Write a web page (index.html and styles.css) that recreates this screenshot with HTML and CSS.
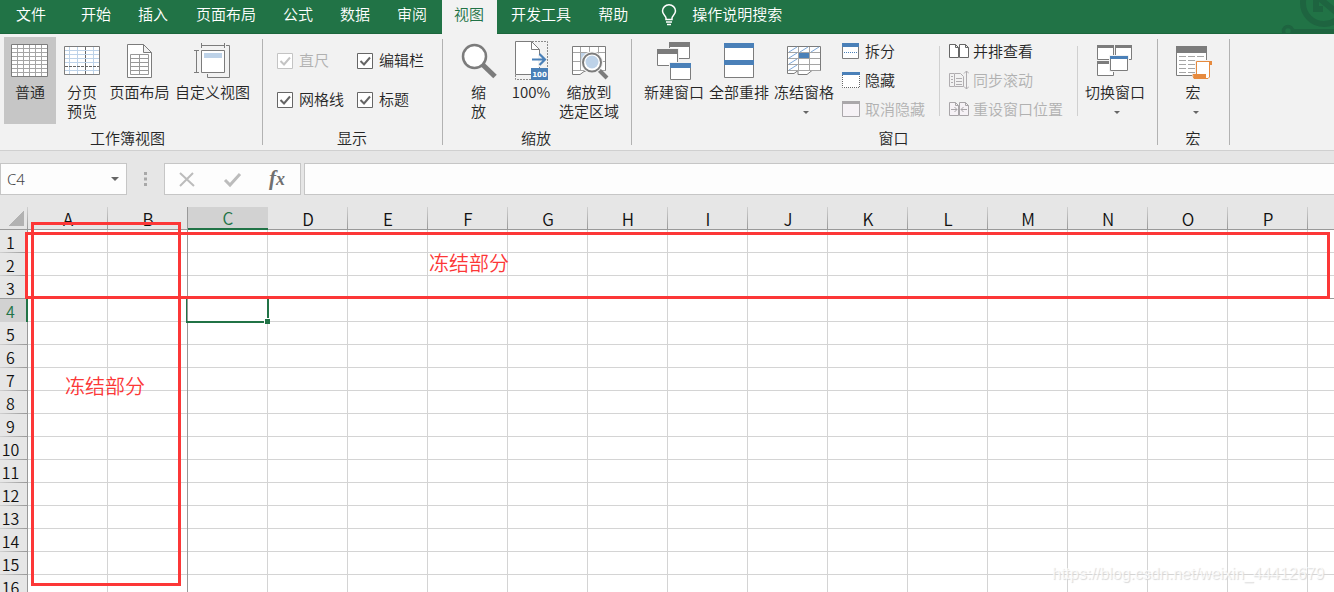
FILE: index.html
```html
<!DOCTYPE html>
<html lang="zh-CN">
<head>
<meta charset="utf-8">
<title>C4</title>
<link rel="stylesheet" href="styles.css">
</head>
<body>
<div class="app">
  <nav class="tabs">
    <span class="tab tab-file">文件</span>
    <span class="tab tab-home">开始</span>
    <span class="tab tab-insert">插入</span>
    <span class="tab tab-layout">页面布局</span>
    <span class="tab tab-formula">公式</span>
    <span class="tab tab-data">数据</span>
    <span class="tab tab-review">审阅</span>
    <span class="tab tab-view">视图</span>
    <span class="tab tab-dev">开发工具</span>
    <span class="tab tab-help">帮助</span>
    <svg class="bulb" viewBox="0 0 16 22" fill="none" stroke="#fff" stroke-width="1.5"><path d="M5 15.5V14C5 12 1.5 10.500 1.500 7A6.500 6.200 0 0 1 14.500 7C14.500 10.500 11 12 11 14V15.500ZM5 18H11M6 20.500H10"/></svg>
    <span class="tab">操作说明搜索</span>
    <svg class="deco" viewBox="1274 0 60 34" fill="none" stroke="#1e6440"><circle cx="1324" cy="3" r="21" stroke-width="6"/><path d="M1313 9H1323M1316 12V0M1318 -3L1337 13" stroke-width="6"/><circle cx="1288" cy="31" r="4.500" stroke-width="3.500"/><path d="M1293 31H1334" stroke-width="4"/></svg>
  </nav>

  <section class="ribbon">
    <div class="group g-views">
      <div class="row">
        <div class="btn on w52"><svg viewBox="4 37 52 46" fill="none"><path fill="#fff" stroke="#7c7c7c" d="M11.500 44.500H47.500V76.500H11.500Z"/><path stroke="#a5a5a5" d="M17.500 45V76M23.500 45V76M29.500 45V76M35.500 45V76M41.500 45V76M12 48.500H47M12 52.500H47M12 56.500H47M12 60.500H47M12 64.500H47M12 68.500H47M12 72.500H47"/></svg><span>普通</span></div>
        <div class="btn w52"><svg viewBox="56 37 52 46" fill="none"><path fill="#fff" d="M64.500 46.500H99.500V74.500H64.500Z"/><path stroke="#bdd2e8" d="M69.500 47V74M77.500 47V74M93.500 47V74M65 50.500H99M65 54.500H99M65 58.500H99M65 62.500H99M65 70.500H99"/><path stroke="#666" stroke-dasharray="3 1" d="M85.500 47V74M65 66.500H99"/><path stroke="#7c7c7c" d="M64.500 46.500H99.500V74.500H64.500Z"/></svg><span>分页<br>预览</span></div>
        <div class="btn w63"><svg viewBox="108 37 63 46" fill="none"><path fill="#fff" stroke="#7c7c7c" d="M127.500 44.500H143.500L151.500 52.500V77.500H127.500ZM143.500 44.500V52.500H151.500"/><path stroke="#999" d="M130.500 54.500H148.500V74.500H130.500ZM139.500 54V74M130 58.500H148M130 62.500H148M130 66.500H148M130 70.500H148"/></svg><span>页面布局</span></div>
        <div class="btn w83"><svg viewBox="171 37 83 46" fill="none" stroke="#7c7c7c"><path fill="#fff" d="M201.500 50.500H224.500V72.500H201.500Z"/><path fill="#bdd2e8" stroke="none" d="M204 53H222V58H204Z"/><path d="M201 45.500H225M201.500 43V48M224.500 43V48M196.500 50V73M194 50.500H199M194 72.500H199M226 45.500H229.500V77.500H207.500V74"/></svg><span>自定义视图</span></div>
      </div>
      <div class="caption">工作簿视图</div>
    </div>

    <div class="group g-show">
      <div class="checks">
        <label class="check off"><svg viewBox="0 0 16 16"><path class="box" d="M.5 .5H15.500V15.500H.5Z"/><path class="tick" d="M3.500 8L7 11.500L13 4.500"/></svg>直尺</label>
        <label class="check"><svg viewBox="0 0 16 16"><path class="box" d="M.5 .5H15.500V15.500H.5Z"/><path class="tick" d="M3.500 8L7 11.500L13 4.500"/></svg>编辑栏</label>
        <label class="check"><svg viewBox="0 0 16 16"><path class="box" d="M.5 .5H15.500V15.500H.5Z"/><path class="tick" d="M3.500 8L7 11.500L13 4.500"/></svg>网格线</label>
        <label class="check"><svg viewBox="0 0 16 16"><path class="box" d="M.5 .5H15.500V15.500H.5Z"/><path class="tick" d="M3.500 8L7 11.500L13 4.500"/></svg>标题</label>
      </div>
      <div class="caption">显示</div>
    </div>

    <div class="group g-zoom">
      <div class="row">
        <div class="btn w51"><svg viewBox="453 37 51 46" fill="none" stroke="#7c7c7c"><path stroke-width="5" d="M483 65L495 76.500"/><circle cx="474.500" cy="56.500" r="11.500" fill="#fff" stroke-width="2.500"/></svg><span>缩<br>放</span></div>
        <div class="btn w54"><svg viewBox="504 37 54 46" fill="none"><path stroke="#8a8a8a" stroke-dasharray="2 1" d="M532 41.500H547.500V68M515.500 75V79.500H531"/><path fill="#fff" stroke="#7c7c7c" d="M515.500 41.500H531.500L539.500 49.500V74.500H515.500Z"/><path stroke="#7c7c7c" d="M531.500 41.500V49.500H539.500"/><path fill="#f2f2f2" d="M538 55H541V67H538Z"/><path stroke="#4a80b8" stroke-width="2.200" d="M532 59.500H545M539.500 54L545 59.500L539.500 65"/><path fill="#4a80b8" d="M531 68H548V80H531Z"/><text x="539.500" y="77" class="hundred">100</text></svg><span>100%</span></div>
        <div class="btn w62"><svg viewBox="558 37 62 46" fill="none" stroke="#7c7c7c"><path fill="#fff" d="M572.500 46.500H605.500V70.500H590L584 71.500L580 74.500H572.500Z"/><path stroke="#a5a5a5" d="M580.500 47V71M589.500 47V71M598.500 47V71M573 52.500H605M573 61.500H605M573 70.500H605"/><path fill="#bdd2e8" stroke="none" d="M581 53H589V61H581Z"/><path stroke-width="4" d="M598 69L607 78"/><circle cx="592" cy="62.500" r="11" fill="#f2f2f2" stroke="none"/><circle cx="592" cy="62.500" r="9" fill="#fff" stroke-width="2"/><circle cx="592" cy="62" r="6.500" fill="#bdd2e8" stroke="none"/></svg><span>缩放到<br>选定区域</span></div>
      </div>
      <div class="caption">缩放</div>
    </div>

    <div class="group g-window">
      <div class="row">
        <div class="btn w64"><svg viewBox="642 37 64 46" fill="#fff" stroke="#7c7c7c"><path d="M669.500 42.500H689.500V58.500H669.500Z"/><path fill="#7c7c7c" stroke="none" d="M669 42H690V47H669Z"/><path stroke="#f2f2f2" d="M656.500 48.500H678.500V66.500H656.500Z"/><path d="M657.500 49.500H677.500V65.500H657.500Z"/><path fill="#7c7c7c" stroke="none" d="M657 49H678V54H657Z"/><path stroke="#f2f2f2" d="M669.500 62.500H691.500V80.500H669.500Z"/><path d="M670.500 63.500H690.500V79.500H670.500Z"/><path fill="#4a80b8" stroke="none" d="M670 63H691V68H670Z"/></svg><span>新建窗口</span></div>
        <div class="btn w66"><svg viewBox="706 37 66 46" fill="#fff" stroke="#7c7c7c"><path d="M724.500 43.500H753.500V77.500H724.500Z"/><path fill="#4a80b8" stroke="none" d="M724 43H754V48H724ZM724 60H754V65H724Z"/></svg><span>全部重排</span></div>
        <div class="btn w64"><svg viewBox="772 37 64 46" fill="none" stroke="#7c7c7c"><path fill="#fff" d="M787.500 46.500H820.500V70.500H812L807 74.500H798V70.500L794 73.500H787.500Z"/><path stroke="#a5a5a5" d="M798.500 47V71M809.500 47V71M788 52.500H820M788 58.500H820M788 64.500H820M788 70.500H820"/><path stroke="#7fa8d8" d="M789 52L797 47M800 52L808 47M811 52L819 47M789 58L797 53M789 64L797 59M789 70L797 65"/><path fill="#4a80b8" stroke="none" d="M799 53H809V58H799Z"/></svg><span>冻结窗格</span><i class="arrow"></i></div>
        <div class="list list-a">
          <div class="item"><svg viewBox="0 0 18 16" fill="#fff" stroke="#7c7c7c"><path d="M.5 .5H16.500V15.500H.5Z"/><path fill="#4a80b8" stroke="none" d="M0 0H17V4H0Z"/><path stroke="#4a80b8" stroke-dasharray="1 1" d="M2 9.500H15"/></svg>拆分</div>
          <div class="item"><svg viewBox="0 0 18 16" fill="#fff"><path d="M0 0H18V16H0Z"/><path stroke="#666" stroke-dasharray="1 1" d="M.5 3V15.500H17.500V3"/><path fill="#4a80b8" d="M0 0H18V3H0Z"/></svg>隐藏</div>
          <div class="item off"><svg viewBox="0 0 18 16" fill="#f6f2f6" stroke="#aaa7aa"><path d="M.5 .5H17.500V15.500H.5Z"/><path fill="#aaa7aa" stroke="none" d="M0 0H18V3H0Z"/></svg>取消隐藏</div>
        </div>
        <div class="list list-b">
          <div class="item"><svg viewBox="0 0 20 20" fill="#fff" stroke="#666"><path d="M.5 3.500H6.500L9.500 6.500V16.500H.5ZM6.500 3.500V6.500H9.500M10.500 3.500H16.500L19.500 6.500V16.500H10.500ZM16.500 3.500V6.500H19.500"/></svg>并排查看</div>
          <div class="item off"><svg viewBox="0 0 20 20" fill="none" stroke="#b0adb0"><path d="M5 3.500H.5V16.500H5M5.500 3.500H11.500L14.500 6.500V16.500H5.500ZM2 6.500H4M2 9.500H4M2 12.500H4M7 8.500H13M7 11.500H13M7 14.500H13M17.500 1V19M15 3.500L17.500 1L20 3.500M15 16.500L17.500 19L20 16.500"/></svg>同步滚动</div>
          <div class="item off"><svg viewBox="0 0 20 20" fill="#f6f2f6" stroke="#a8a5a8"><path d="M.5 3.500H6.500L9.500 6.500V16.500H.5ZM6.500 3.500V6.500H9.500M10.500 3.500H16.500L19.500 6.500V16.500H10.500ZM16.500 3.500V6.500H19.500"/><path fill="none" d="M2 10.500H8M5.500 8L8 10.500L5.500 13M18 10.500H12M14.500 8L12 10.500L14.500 13"/></svg>重设窗口位置</div>
        </div>
        <div class="btn w64 switch"><svg viewBox="1083 37 64 46" fill="#fff" stroke="#7c7c7c"><path d="M1097.500 45.500H1113.500V59.500H1097.500ZM1115.500 45.500H1131.500V59.500H1115.500ZM1097.500 61.500H1113.500V75.500H1097.500Z"/><path fill="#7c7c7c" stroke="none" d="M1097 45H1114V48H1097ZM1115 45H1132V48H1115ZM1097 61H1114V64H1097Z"/><path stroke="#f2f2f2" d="M1109.500 55.500H1128.500V71.500H1109.500Z"/><path d="M1110.500 56.500H1127.500V70.500H1110.500Z"/><path fill="#4a80b8" stroke="none" d="M1110 56H1128V59H1110Z"/></svg><span>切换窗口</span><i class="arrow"></i></div>
      </div>
      <div class="caption">窗口</div>
    </div>

    <div class="group g-macro">
      <div class="row">
        <div class="btn w66 macro"><svg viewBox="1160 37 66 46" fill="#fff" stroke="#7c7c7c"><path d="M1176.500 46.500H1206.500V75.500H1176.500Z"/><path fill="#7c7c7c" stroke="none" d="M1176 46H1207V53H1176Z"/><path stroke="#a5a5a5" stroke-dasharray="7 2" d="M1179 56.500H1204M1179 60.500H1204M1179 64.500H1204M1179 68.500H1204M1179 72.500H1204"/><path stroke="#f2f2f2" stroke-width="3" d="M1196.500 61.500H1211V66H1209.500V78.500H1193.500V74.500H1196.500Z"/><path stroke="#e68a3e" d="M1196.500 61.500H1211.500V64.500H1209.500V77L1208 78.500H1194L1193 76V74.500H1196.500Z"/><path fill="#e68a3e" stroke="none" d="M1193 74H1206V78.500H1194ZM1209 61H1212V65H1209Z"/></svg><span>宏</span><i class="arrow"></i></div>
      </div>
      <div class="caption">宏</div>
    </div>
  </section>

  <section class="formula">
    <div class="name-box"><span>C4</span><i class="arrow"></i></div>
    <svg class="dots" viewBox="0 0 3 14" fill="#a8a8a8"><path d="M0 0H3V3H0ZM0 5.500H3V8.500H0ZM0 11H3V14H0Z"/></svg>
    <div class="fx-box">
      <svg viewBox="0 0 136 30" fill="none" stroke="#bcbcbc"><path stroke-width="2" d="M15 9L29 22M28 9L15 22"/><path stroke-width="3" d="M60 16L65 21L75 10"/></svg>
      <span class="fx">f<small>x</small></span>
    </div>
    <div class="input"></div>
  </section>

  <section class="sheet">
    <table class="grid" id="grid"></table>
    <div class="freeze-v"></div>
    <div class="freeze-h"></div>
    <div class="cursor"><i></i></div>
    <div class="mark mark-cols">冻结部分</div>
    <div class="mark mark-rows">冻结部分</div>
    <div class="watermark">https://blog.csdn.net/weixin_44412679</div>
  </section>
</div>
<script src="grid.js"></script>
</body>
</html>
```
FILE: styles.css
```css
* { box-sizing: border-box; }
body { margin: 0; font: 350 15px/19px "Noto Sans CJK SC", sans-serif; color: #262626; }
svg { display: block; flex: none; }
.app { width: 1334px; height: 592px; overflow: hidden; background: #e6e6e6; display: flex; flex-direction: column; }

.tabs { position: relative; height: 34px; flex: none; display: flex; background: #217346; color: #fff; border-bottom: 1px solid #1c673d; }
.tab { line-height: 27px; white-space: nowrap; height: 34px; }
.tab-file { margin-left: 16px; }
.tab-home { margin-left: 35px; }
.tab-insert, .tab-data, .tab-review { margin-left: 27px; }
.tab-layout { margin-left: 28px; }
.tab-formula { margin-left: 27px; }
.tab-view { margin-left: 15px; padding: 0 13px 0 12px; width: 55px; background: #f2f2f2; color: #217346; }
.tab-dev { margin-left: 14px; }
.tab-help { margin-left: 27px; }
.bulb { width: 16px; height: 22px; margin: 4px 15px 0 33px; }
.deco { position: absolute; right: 0; top: 0; width: 60px; height: 34px; }

.ribbon { height: 117px; flex: none; display: flex; background: #f2f2f2; border-bottom: 1px solid #d0d0d0; padding-top: 3px; }
.group { position: relative; display: flex; flex-direction: column; }
.group::after { content: ""; position: absolute; right: 0; top: 2px; width: 1px; height: 106px; background: #b2b2b2; }
.g-views { width: 263px; padding-left: 4px; }
.g-show { width: 180px; }
.g-zoom { width: 189px; padding-left: 10px; }
.g-window { width: 526px; padding-left: 10px; }
.g-macro { width: 72px; padding-left: 2px; }
.row { display: flex; height: 87px; }
.caption { text-align: center; height: 19px; margin-top: 4px; }
.g-views .caption { padding-right: 12px; }
.g-show .caption { padding-right: 2px; }
.g-zoom .caption { padding-right: 13px; }
.g-window .caption { padding-right: 13px; }
.g-macro .caption { padding-right: 4px; }
.btn { display: flex; flex-direction: column; align-items: center; text-align: center; white-space: nowrap; height: 87px; }
.btn svg { width: 100%; height: 46px; }
.btn span { margin-top: -1px; }
.on { background: #c6c6c6; }
.w51 { width: 51px; }
.w52 { width: 52px; }
.w54 { width: 54px; }
.w62 { width: 62px; }
.w63 { width: 63px; }
.w64 { width: 64px; }
.w66 { width: 66px; }
.w83 { width: 83px; }
.hundred { font: bold 7px "DejaVu Sans", sans-serif; fill: #fff; text-anchor: middle; }
.arrow { width: 0; height: 0; border: 3.5px solid transparent; border-top-color: #666; border-bottom: 0; }
.btn .arrow { margin: 10px 0 0 4px; }
.macro .arrow { margin-left: 6px; }

.checks { display: grid; grid-template-columns: 80px 80px; grid-template-rows: 39px 39px; padding: 4px 0 0 14px; height: 87px; }
.check { display: flex; align-items: center; gap: 6px; white-space: nowrap; padding-bottom: 2px; }
.check svg { width: 16px; height: 16px; margin-top: 3px; }
.box { fill: #fff; stroke: #666; }
.tick { fill: none; stroke: #666; stroke-width: 2; }
.off { color: #b1b1b1; }
.off .box, .off .tick { stroke: #c4c4c4; }

.list { display: flex; flex-direction: column; }
.item { display: flex; align-items: center; height: 29px; white-space: nowrap; padding-bottom: 2px; }
.list-a { margin-left: 6px; width: 97px; height: 87px; }
.list-a svg { width: 18px; height: 16px; margin: 1px 5px 0 0; }
.list-b { width: 139px; padding-left: 10px; background: linear-gradient(#d0d0d0, #d0d0d0) 0 9px / 1px 70px no-repeat, linear-gradient(#d0d0d0, #d0d0d0) 100% 9px / 1px 70px no-repeat; }
.list-b svg { width: 20px; height: 20px; margin: 1px 4px 0 0; }
.switch { margin-left: 5px; }

.formula { height: 56px; flex: none; display: flex; padding-top: 12px; }
.name-box { width: 127px; height: 32px; border: 1px solid #c6c6c6; background: #fdfdfd; display: flex; align-items: center; justify-content: space-between; padding: 0 7px 0 6px; font-family: "Noto Sans", sans-serif; color: #444; }
.name-box .arrow { border-width: 4px 4px 0; }
.dots { width: 3px; height: 14px; margin: 9px 18px 0 17px; }
.fx-box { display: flex; width: 137px; height: 32px; margin-left: -1px; border: 1px solid #c6c6c6; background: #fdfdfd; }
.fx-box svg { width: 136px; height: 30px; margin-right: -32px; }
.fx { font: italic bold 21px/28px "Liberation Serif", serif; color: #707070; }
.fx small { font-size: 18px; }
.input { flex: 1; height: 32px; margin-left: 3px; border: 1px solid #c6c6c6; border-right: 0; background: #fdfdfd; }

.sheet { position: relative; height: 385px; overflow: hidden; }
.grid { border-collapse: separate; border-spacing: 0; table-layout: fixed; width: 1388px; font-size: 17px; line-height: 21px; }
.grid th { font-weight: 350; padding: 0; background: #e6e6e6; color: #111; white-space: nowrap; overflow: hidden; }
.grid thead th { height: 23px; line-height: 21px; border-bottom: 1px solid #999; background: linear-gradient(#d0d0d0, #999) 100% 0 / 1px 100% no-repeat #e6e6e6; }
.grid tbody th { height: 23px; line-height: 24px; font-size: 16px; border-right: 1px solid #999; padding-right: 6px; background: linear-gradient(90deg, #d0d0d0, #999) 0 100% / 100% 1px no-repeat #e6e6e6; }
.grid tbody th div { height: 23px; }
.grid .corner { width: 28px; background: linear-gradient(135deg, transparent 50%, #b2b2b2 50%) 9px 4px / 15px 15px no-repeat, linear-gradient(#d0d0d0, #999) 100% 0 / 1px 100% no-repeat #e6e6e6; }
.grid td { height: 23px; padding: 0; background: #fff; border-right: 1px solid #d4d4d4; border-bottom: 1px solid #d4d4d4; }
.grid thead .active { background: #d2d2d2; color: #217346; border-bottom: 2px solid #217346; }
.grid tbody .active { background: #d2d2d2; color: #217346; border-right: 2px solid #217346; padding-right: 5px; }
.freeze-v { position: absolute; left: 187px; top: 0; width: 1px; height: 385px; background: #999; }
.freeze-h { position: absolute; left: 0; top: 91px; width: 1334px; height: 1px; background: #999; }
.cursor { position: absolute; left: 186px; top: 92px; width: 83px; height: 24px; border: 2px solid #217346; border-top: 0; border-left-width: 1px; }
.cursor i { position: absolute; right: -3px; bottom: -3px; width: 6px; height: 6px; background: #217346; border: solid #fff; border-width: 1px 0 0 1px; }
.mark { position: absolute; border: 3px solid #fc3737; color: #fc3737; font-size: 20px; line-height: 26px; }
.mark-cols { left: 31px; top: 15px; width: 150px; height: 364px; padding: 148px 0 0 31px; }
.mark-rows { left: 25px; top: 25px; width: 1305px; height: 67px; padding: 15px 0 0 401px; }
.watermark { position: absolute; left: 1052px; top: 357px; font: 16px/20px "Liberation Sans", sans-serif; color: rgba(255, 255, 255, .75); text-shadow: 1px 1px 1px #d8d8d8; white-space: nowrap; }
```
FILE: grid.js
```js
const grid = document.getElementById('grid');
const columns = [...'ABCDEFGHIJKLMNOP', ''];
const head = columns.map(c => `<th class="${c === 'C' ? 'active' : ''}">${c}</th>`).join('');
const cells = '<td></td>'.repeat(columns.length);
let rows = '';
for (let r = 1; r <= 16; r++) {
  rows += `<tr><th class="${r === 4 ? 'active' : ''}"><div>${r}</div></th>${cells}</tr>`;
}
grid.innerHTML = `<thead><tr><th class="corner"></th>${head}</tr></thead><tbody>${rows}</tbody>`;
```
